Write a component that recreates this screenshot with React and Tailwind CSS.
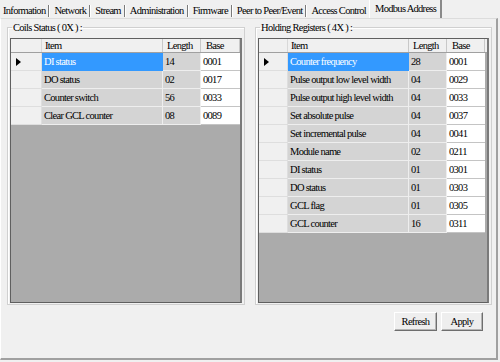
import React from 'react';

const coils = [
  ['DI status', '14', '0001'],
  ['DO status', '02', '0017'],
  ['Counter switch', '56', '0033'],
  ['Clear GCL counter', '08', '0089'],
];

const holding = [
  ['Counter frequency', '28', '0001'],
  ['Pulse output low level width', '04', '0029'],
  ['Pulse output high level width', '04', '0033'],
  ['Set absolute pulse', '04', '0037'],
  ['Set incremental pulse', '04', '0041'],
  ['Module name', '02', '0211'],
  ['DI status', '01', '0301'],
  ['DO status', '01', '0303'],
  ['GCL flag', '01', '0305'],
  ['GCL counter', '16', '0311'],
];

const tabs = ['Information', 'Network', 'Stream', 'Administration', 'Firmware', 'Peer to Peer/Event', 'Access Control'];

// little black arrow in the row header of the current row
function RowArrow() {
  return (
    <svg width="5" height="8" viewBox="0 0 5 8">
      <path d="M0 0 L5 4 L0 8 Z" fill="#000" />
    </svg>
  );
}

function Grid({ rows, hdrW, baseW }) {
  return (
    <div className="h-[265px] bg-[#ababab] border border-[#5f5f5f] border-r-2 border-r-[#7a7a7a] overflow-hidden">
      {/* header */}
      <div className="flex h-[14px] bg-[#f0f0f0] border-b border-[#a0a0a0]">
        <div className={`${hdrW} border-r border-[#d8d8d8]`} />
        <div className="w-[121px] pl-[3px] border-r border-[#c8c8c8] flex items-center">Item</div>
        <div className="w-[38px] pl-[4px] border-r border-[#c8c8c8] flex items-center">Length</div>
        <div className={`${baseW} pl-[5px] border-r border-[#c8c8c8] flex items-center`}>Base</div>
        <div className="flex-1" />
      </div>
      {rows.map(([item, len, base], i) => (
        <div key={i} className="flex h-[18px]">
          <div className={`${hdrW} bg-[#f0f0f0] border-b border-r border-[#dedede] flex items-center pl-[5px]`}>
            {i === 0 && <RowArrow />}
          </div>
          <div
            className={`w-[121px] pl-[2px] border-b border-r flex items-center ${
              i === 0 ? 'bg-[#3399ff] text-white border-[#3399ff]' : 'bg-[#d4d4d4] border-[#eeeeee]'
            }`}
          >
            {item}
          </div>
          <div className="w-[38px] pl-[2px] bg-[#d4d4d4] border-b border-r border-[#eeeeee] flex items-center">{len}</div>
          <div className={`${baseW} pl-[2px] bg-white border-b border-[#c4c4c4] flex items-center`}>{base}</div>
        </div>
      ))}
    </div>
  );
}

function GroupBox({ title, width, children }) {
  return (
    <fieldset className={`${width} h-[284px] border border-[#d0d0d0] shadow-[inset_1px_1px_0_#ffffff] px-[2px] pt-[4px] pb-[1px]`}>
      <legend className="ml-[2px] px-[1px] leading-[13px]">{title}</legend>
      {children}
    </fieldset>
  );
}

export default function App() {
  return (
    <div className="w-[500px] h-[362px] bg-[#f0f0f0] text-black overflow-hidden text-[10.5px] tracking-[-0.7px] font-['Liberation_Serif','DejaVu_Serif',serif]">
      {/* tab strip */}
      <div className="h-[18px] flex pl-[3px]">
        {tabs.map((t, i) => (
          <div key={t} className="flex items-center pt-[3px]">
            <span className={i === 0 ? 'pr-[3px]' : 'pl-[4px] pr-[3px]'}>{t}</span>
            {i < tabs.length - 1 && <span className="h-[12px] w-[2px] border-l border-[#7a7a7a] border-r border-r-white" />}
          </div>
        ))}
        <div className="flex items-center pb-[1px] pl-[5px] pr-[4px] border-r-2 border-r-[#8a8a8a] border-l border-l-white">
          Modbus Address
        </div>
      </div>

      {/* tab page */}
      <div className="w-[498px] h-[342px] border-t border-[#dcdcdc] border-l border-l-white border-r-2 border-r-[#a0a0a0] border-b-2 border-b-[#a0a0a0] pt-[2px] pl-[6px] flex flex-col">
        <div className="flex gap-[10px]">
          <GroupBox title="Coils Status ( 0X ) :" width="w-[236px]">
            <Grid rows={coils} hdrW="w-[31px]" baseW="w-[39px]" />
          </GroupBox>
          <GroupBox title="Holding Registers ( 4X ) :" width="w-[237px]">
            <Grid rows={holding} hdrW="w-[29px]" baseW="w-[38px]" />
          </GroupBox>
        </div>

        <div className="flex justify-end gap-[4px] mt-[7px] pr-[13px]">
          <button className="w-[43px] h-[19px] bg-[#eeeeee] border border-t-white border-l-white border-r-[#6e6e6e] border-b-[#6e6e6e] shadow-[inset_-1px_-1px_0_#b5b5b5]">
            Refresh
          </button>
          <button className="w-[42px] h-[19px] bg-[#eeeeee] border border-t-white border-l-white border-r-[#6e6e6e] border-b-[#6e6e6e] shadow-[inset_-1px_-1px_0_#b5b5b5]">
            Apply
          </button>
        </div>
      </div>
    </div>
  );
}
